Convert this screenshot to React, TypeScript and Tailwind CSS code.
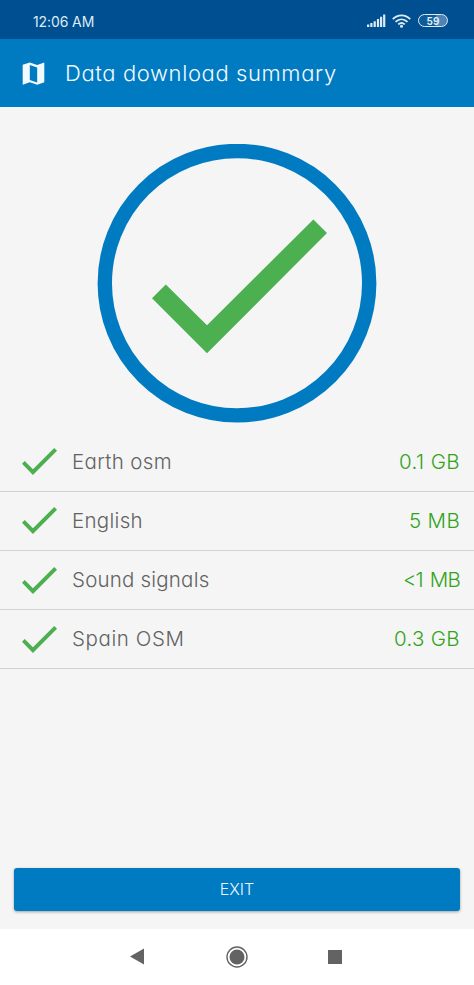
const rows = [
  { name: "Earth osm", size: "0.1 GB", nameSpacing: "tracking-[0.35px]", sizeSpacing: "tracking-[0.4px]" },
  { name: "English", size: "5 MB", nameSpacing: "tracking-[0.3px]", sizeSpacing: "tracking-[0.3px]" },
  { name: "Sound signals", size: "<1 MB", nameSpacing: "tracking-[0.2px]", sizeSpacing: "tracking-[-0.8px] [word-spacing:2px]" },
  { name: "Spain OSM", size: "0.3 GB", nameSpacing: "tracking-[0.6px]", sizeSpacing: "tracking-[0.3px]" },
];

function Check({ className }: { className: string }) {
  return (
    <svg className={className} viewBox="0 0 175 134" fill="#4caf50" preserveAspectRatio="none">
      <path d="M0 78.5 13.7 65 54.7 105.7 161.3 0 175 13.5 54.7 134Z" />
    </svg>
  );
}

function StatusBar() {
  return (
    <div className="flex h-[39px] items-center bg-[#004f90] pt-[2px] pr-[26px] pl-[33px] text-[#dcecf6]">
      <span className="mt-0.5 text-[14px] font-normal tracking-[-0.1px]">12:06 AM</span>
      <svg className="ml-auto h-[13px] w-[19px]" viewBox="0 0 19 13" fill="currentColor">
        <path d="M0 10.5h2.3V13H0zM3.3 9h2.2v4H3.3zM6.6 7.2h2.2V13H6.6zM9.9 5h2.2v8H9.9zM13 2.7h2.2V13H13zM16.1.4h2.2V13h-2.2z" />
      </svg>
      <svg className="ml-1.5 h-[14px] w-[19px]" viewBox="0 0 19 14" fill="none" stroke="currentColor" strokeWidth="1.9">
        <path d="M.8 5.2C5.8.1 13.2.1 18.2 5.2M3.5 7.9c3.6-3.4 8.4-3.4 12 0M6.2 10.4c2-1.8 4.6-1.8 6.6 0" />
        <circle cx="9.5" cy="12.3" r="1.5" fill="currentColor" stroke="none" />
      </svg>
      <div className="ml-[7px] flex h-[13px] w-[30px] items-center justify-center rounded-full border-[1.5px] border-[#dcecf6] bg-linear-to-r from-[#105a98] from-60% to-[#4d84b4] to-60% text-[10px] leading-none font-bold">
        59
      </div>
    </div>
  );
}

export default function App() {
  return (
    <div className="flex h-[985px] w-[474px] flex-col overflow-hidden bg-[#f5f5f5] font-['Inter',sans-serif] font-light [font-feature-settings:'cv11']">
      <StatusBar />
      <header className="flex h-[67.5px] shrink-0 items-center bg-[#007bc1] pl-[22px] text-[#f3faff]">
        <svg className="mt-px h-[23px] w-[23px]" viewBox="0 0 23 23" fill="currentColor" fillRule="evenodd">
          <path d="M.7 2.8 7.8.5l7.4 2.4L22.3.4v19.9l-7.1 2.4-7.4-2.4L.7 22.7zM7.8 3.1v14.8l7.4 2.5V5.5z" />
        </svg>
        <h1 className="mt-0.5 ml-[20px] text-[22px] tracking-[0.61px] whitespace-nowrap">Data download summary</h1>
      </header>

      <main className="flex flex-1 flex-col">
        <div className="ml-[97px] mt-[37.3px] flex h-[279px] w-[280px] shrink-0">
          <svg className="h-full w-full" viewBox="0 0 280 279">
            <circle cx="140" cy="139.2" r="132.2" fill="none" stroke="#007bc1" strokeWidth="14.4" />
            <path d="M55 154.2 68.8 140.6 110 181.3 216.4 75.4 230 89 110 209.3Z" fill="#4caf50" />
          </svg>
        </div>

        <ul className="mt-[10px]">
          {rows.map((row) => (
            <li key={row.name} className="flex h-[59.1px] items-center border-b-[1.5px] border-[#d2d2d2] pr-[14px] pl-[22px] text-[20.5px]">
              <Check className="h-[27px] w-[35px]" />
              <span className={"ml-[15px] mt-px text-[#626262] " + row.nameSpacing}>{row.name}</span>
              <span className={"ml-auto mt-px text-[#32a31b] " + row.sizeSpacing}>{row.size}</span>
            </li>
          ))}
        </ul>

        <button className="mr-[14.5px] ml-[14.4px] mt-auto mb-[17.5px] h-[43.5px] rounded-[3px] bg-[#007bc1] text-[16px] text-[#eef8ff] shadow-[0_1px_3px_rgba(0,0,0,0.35)]">
          EXIT
        </button>
      </main>

      <nav className="flex h-[56.5px] shrink-0 items-center bg-white pl-[130px] text-[#636363]">
        <svg className="h-[17px] w-[14px]" viewBox="0 0 14 17" fill="currentColor">
          <path d="M0 8.5 14 .5v16z" />
        </svg>
        <svg className="ml-[82px] h-[22px] w-[22px]" viewBox="0 0 22 22" fill="currentColor">
          <circle cx="11" cy="11" r="10" fill="none" stroke="currentColor" strokeWidth="1.4" />
          <circle cx="11" cy="11" r="7.5" />
        </svg>
        <div className="ml-[80px] h-[14px] w-[14px] bg-[#636363]" />
      </nav>
    </div>
  );
}
